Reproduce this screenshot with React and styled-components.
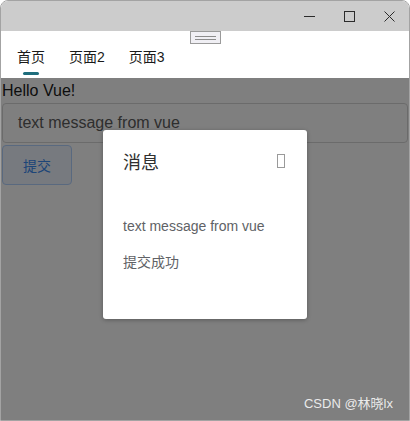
import React from 'react';
import styled, { createGlobalStyle } from 'styled-components';

const GlobalStyle = createGlobalStyle`
  html, body {
    margin: 0;
    padding: 0;
    overflow: hidden;
    background: #fff;
  }
  * {
    box-sizing: border-box;
  }
`;

const Window = styled.div`
  position: relative;
  width: 410px;
  height: 421px;
  display: flex;
  flex-direction: column;
  border: 1px solid #a3a3a3;
  border-radius: 8px 8px 0 0;
  overflow: hidden;
  font-family: 'Liberation Sans', 'Noto Sans CJK SC', sans-serif;
`;

const TitleBar = styled.div`
  height: 30px;
  flex-shrink: 0;
  display: flex;
  justify-content: flex-end;
  background: #cccccc;
`;

const CaptionButton = styled.div`
  width: 40px;
  height: 30px;
  display: flex;
  align-items: center;
  justify-content: center;
  color: #2b2b2b;
`;

const Handle = styled.div`
  position: absolute;
  left: 189px;
  top: 30px;
  width: 31px;
  height: 13px;
  border: 1px solid #9a9a9a;
  background: #f0eff4;
  display: flex;
  flex-direction: column;
  justify-content: center;
  gap: 2px;
  padding: 0 4px;
  z-index: 2;

  span {
    display: block;
    height: 1px;
    background: #8c8c8c;
  }
`;

const Nav = styled.div`
  height: 47px;
  flex-shrink: 0;
  display: flex;
  align-items: flex-start;
  padding: 17px 0 0 4px;
  background: #fff;
`;

const Tab = styled.div`
  padding: 0 12px;
  height: 30px;
  font-size: 14px;
  line-height: 18px;
  color: #1a1a1a;
  display: flex;
  flex-direction: column;
  align-items: center;

  &::after {
    content: '';
    display: ${p => (p.$active ? 'block' : 'none')};
    width: 16px;
    height: 3px;
    border-radius: 2px;
    background: #1e6d7c;
    margin-top: 6px;
  }
`;

const Content = styled.div`
  position: relative;
  flex: 1;
  padding: 0 1px;
  background: #fff;
`;

const Hello = styled.div`
  font-size: 16px;
  line-height: 24px;
  color: #1a1a1a;
  margin-top: 1px;
`;

const Input = styled.div`
  height: 40px;
  border: 1px solid #d6d6d6;
  border-radius: 4px;
  padding-left: 15px;
  display: flex;
  align-items: center;
  font-size: 16px;
  color: #5c5c5c;
`;

const Button = styled.div`
  width: 70px;
  height: 40px;
  margin-top: 2px;
  border: 1px solid #b3d3ff;
  border-radius: 4px;
  background: #eef4ff;
  color: #3a8af0;
  font-size: 14px;
  display: flex;
  align-items: center;
  justify-content: center;
`;

const Overlay = styled.div`
  position: absolute;
  inset: 0;
  background: rgba(0, 0, 0, 0.5);
  display: flex;
  justify-content: center;
  align-items: flex-start;
  padding-top: 52px;
`;

const Dialog = styled.div`
  width: 204px;
  height: 189px;
  background: #fff;
  border-radius: 3px;
  box-shadow: 0 1px 4px rgba(0, 0, 0, 0.3);
  padding: 20px 22px 0 20px;
`;

const DialogHeader = styled.div`
  display: flex;
  justify-content: space-between;
  align-items: center;
  height: 22px;
  font-size: 18px;
  color: #303030;
`;

const Tofu = styled.span`
  width: 8px;
  height: 14px;
  border: 1px solid #9a9a9a;
`;

const DialogText = styled.div`
  font-size: 14px;
  line-height: 18px;
  color: #606266;
  margin-top: ${p => p.$top}px;
`;

const Watermark = styled.div`
  position: absolute;
  right: 16px;
  bottom: 8px;
  font-size: 13px;
  color: rgba(255, 255, 255, 0.85);
`;

const App = () => (
  <>
    <GlobalStyle />
    <Window>
      <TitleBar>
        <CaptionButton>
          <svg width="11" height="11" viewBox="0 0 11 11">
            <line x1="0" y1="5.5" x2="11" y2="5.5" stroke="currentColor" strokeWidth="1" />
          </svg>
        </CaptionButton>
        <CaptionButton>
          <svg width="11" height="11" viewBox="0 0 11 11">
            <rect x="0.5" y="0.5" width="10" height="10" fill="none" stroke="currentColor" strokeWidth="1" />
          </svg>
        </CaptionButton>
        <CaptionButton>
          <svg width="11" height="11" viewBox="0 0 11 11">
            <path d="M0.5 0.5 L10.5 10.5 M10.5 0.5 L0.5 10.5" stroke="currentColor" strokeWidth="1" />
          </svg>
        </CaptionButton>
      </TitleBar>
      <Handle>
        <span />
        <span />
      </Handle>
      <Nav>
        <Tab $active>首页</Tab>
        <Tab>页面2</Tab>
        <Tab>页面3</Tab>
      </Nav>
      <Content>
        <Hello>Hello Vue!</Hello>
        <Input>text message from vue</Input>
        <Button>提交</Button>
        <Overlay>
          <Dialog>
            <DialogHeader>
              <span>消息</span>
              <Tofu />
            </DialogHeader>
            <DialogText $top={45}>text message from vue</DialogText>
            <DialogText $top={18}>提交成功</DialogText>
          </Dialog>
        </Overlay>
        <Watermark>CSDN @林晓lx</Watermark>
      </Content>
    </Window>
  </>
);

export default App;
